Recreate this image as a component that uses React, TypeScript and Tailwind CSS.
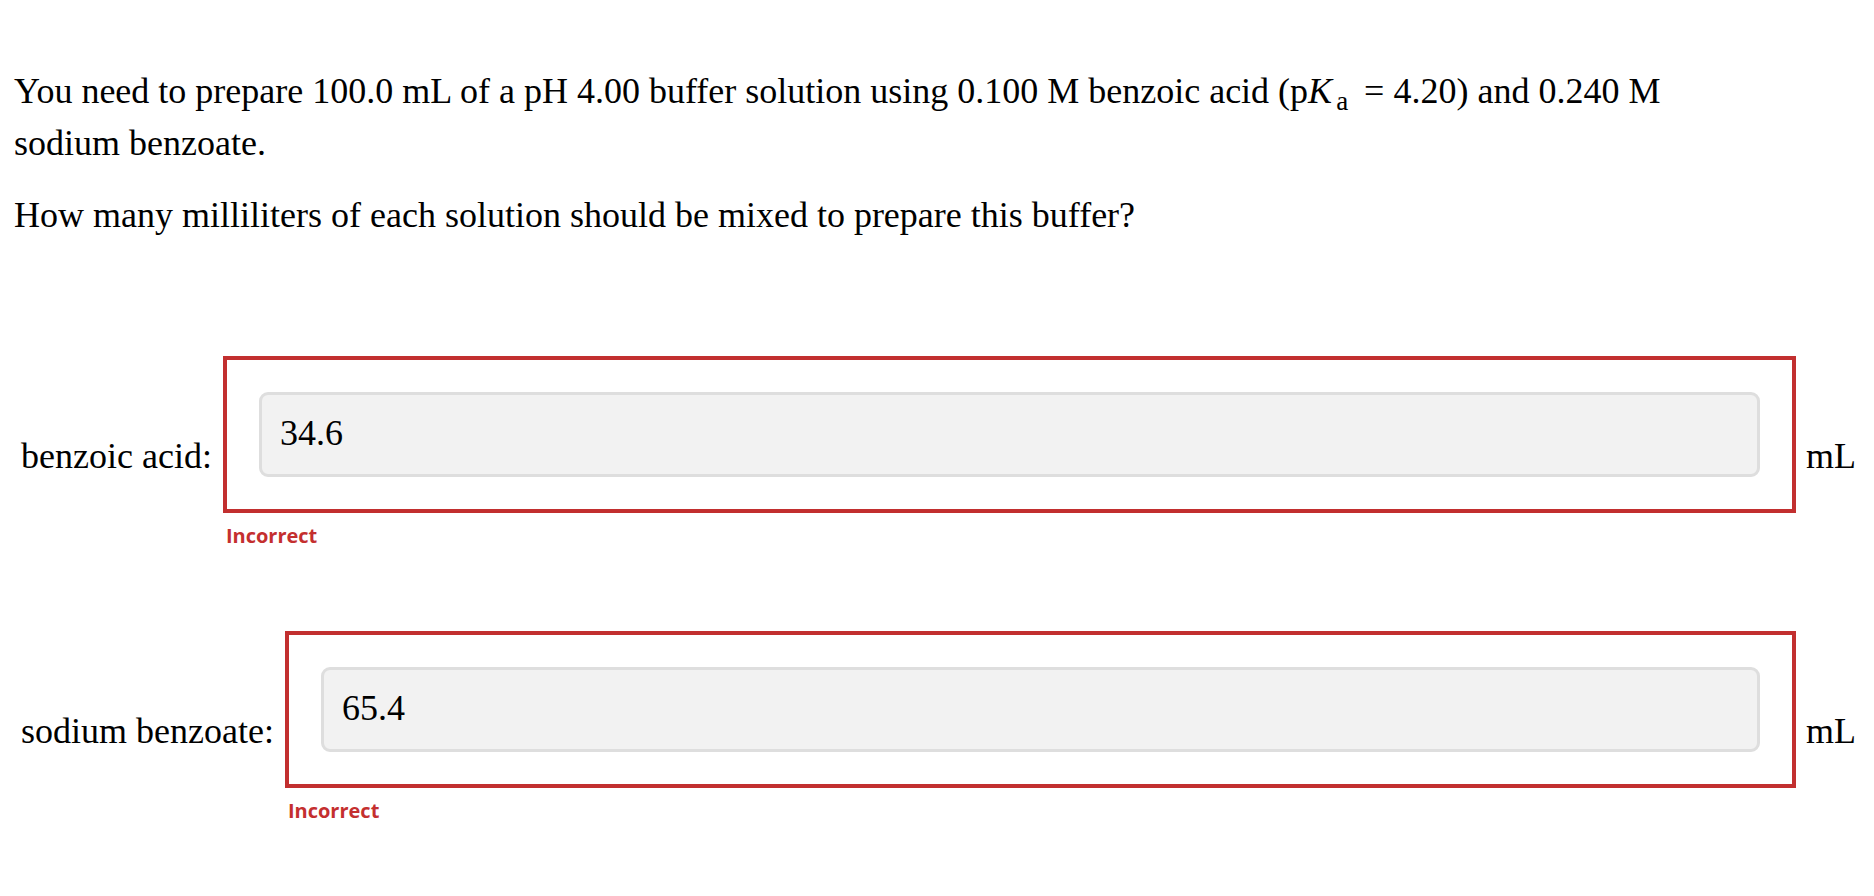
import React from "react";

const serif = { fontFamily: '"Liberation Serif", "Times New Roman", Times, serif' };

function AnswerRow({ label, value }: { label: string; value: string }) {
  return (
    <div className="flex items-start text-[36px] leading-[52px] text-black">
      <span className="mt-[74px] mr-[11px] whitespace-nowrap">{label}</span>
      <div className="flex-1 flex flex-col">
        <div className="border-4 border-[#c22f2f] p-8">
          <div className="h-[85px] rounded-[9px] border-[3px] border-[#dedede] bg-[#f2f2f2] pt-[12px] pl-[18px]">
            {value}
          </div>
        </div>
        <span className="mt-[9px] pl-[3px] text-[20px] leading-[28px] font-bold text-[#c42f2f] font-['Open_Sans',sans-serif]">
          Incorrect
        </span>
      </div>
      <span className="mt-[74px] ml-[10px]">mL</span>
    </div>
  );
}

export default function App() {
  return (
    <div className="min-h-screen bg-white text-black" style={serif}>
      <section className="pt-[65px] pl-[14px] w-[1700px] text-[36px] leading-[52px]">
        <p>
          You need to prepare 100.0 mL of a pH 4.00 buffer solution using 0.100 M benzoic acid (p
          <i>K</i>
          <sub className="ml-[4px] mr-[7px]">a</sub> = 4.20) and 0.240 M sodium benzoate.
        </p>
        <p className="mt-[20px]">How many milliliters of each solution should be mixed to prepare this buffer?</p>
      </section>

      <div className="mt-[115px] pl-[21px] pr-[18px] flex flex-col gap-[81px]">
        <AnswerRow label="benzoic acid:" value="34.6" />
        <AnswerRow label="sodium benzoate:" value="65.4" />
      </div>
    </div>
  );
}
